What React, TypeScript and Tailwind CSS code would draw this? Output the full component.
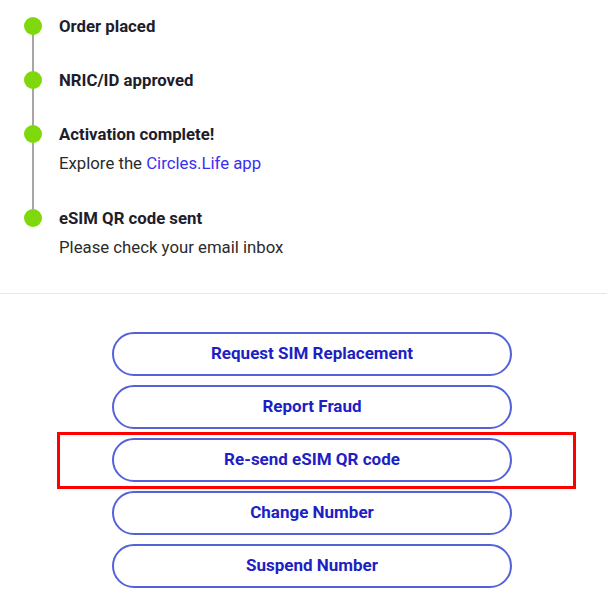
import React from "react";

const items = [
  { title: "Order placed" },
  { title: "NRIC/ID approved" },
  { title: "Activation complete!", sub: "link" },
  { title: "eSIM QR code sent", sub: "Please check your email inbox" },
];

const buttons = [
  "Request SIM Replacement",
  "Report Fraud",
  "Re-send eSIM QR code",
  "Change Number",
  "Suspend Number",
];

export default function App() {
  return (
    <div className="relative w-[607px] h-[604px] bg-white font-['Roboto',sans-serif] overflow-hidden">
      <div className="relative pt-[14px] pl-[24px]">
        <div className="absolute left-[32px] top-[26px] w-[2px] h-[193px] bg-[#a6a6a6]" />
        {items.map((it, i) => (
          <div key={i} className={`flex ${i === 0 || i === 1 ? "pb-[30px]" : i === 2 ? "pb-[31px]" : ""}`}>
            <div className="relative z-10 mt-[3px] w-[18px] h-[18px] rounded-full bg-[#7ed80c] shrink-0" />
            <div className="ml-[17px]">
              <div className="text-[16.75px] leading-[24px] font-bold text-[#1d1d2b]">{it.title}</div>
              {it.sub === "link" && (
                <div className="mt-[5px] text-[16.75px] leading-[24px] text-[#2b2b2b]">
                  Explore the <span className="text-[#3b2ef5]">Circles.Life app</span>
                </div>
              )}
              {it.sub && it.sub !== "link" && (
                <div className="mt-[5px] text-[16.75px] leading-[24px] text-[#2b2b2b]">{it.sub}</div>
              )}
            </div>
          </div>
        ))}
      </div>
      <div className="mt-[34px] h-px bg-[#e6e8ef]" />
      <div className="flex flex-col pt-[38px] pl-[112px] gap-[9px]">
        {buttons.map((b) => (
          <button
            key={b}
            className="w-[400px] h-[44px] rounded-full border-2 border-[#5462da] bg-white text-[17px] font-bold text-[#1d1fc4] flex items-center justify-center"
          >
            {b}
          </button>
        ))}
      </div>
      <div className="absolute left-[57px] top-[432px] w-[519px] h-[57px] border-[3px] border-[#ff0000] pointer-events-none" />
    </div>
  );
}
